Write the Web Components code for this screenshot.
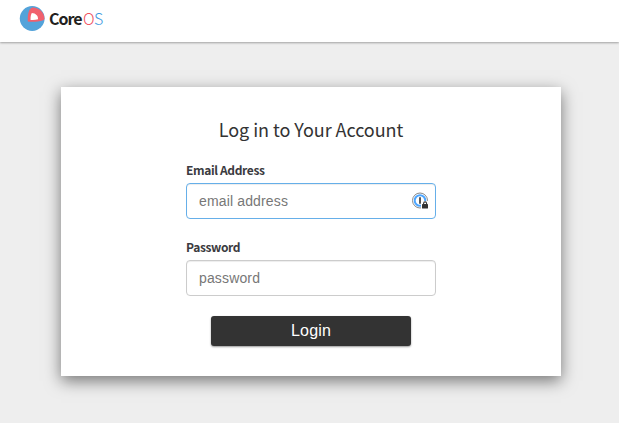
<!DOCTYPE html>
<html lang="en">
<head>
<meta charset="utf-8">
<title>CoreOS Account</title>
<style>
html, body { margin: 0; height: 100%; }
body { background: #eee; font-family: "Noto Sans CJK SC", sans-serif; color: #333; overflow: hidden; }
</style>
</head>
<body>
<account-page></account-page>
<script>
const define = (name, html) => {
  const template = document.createElement('template');
  template.innerHTML = html;
  customElements.define(name, class extends HTMLElement {
    constructor() {
      super();
      this.attachShadow({ mode: 'open' }).append(template.content.cloneNode(true));
    }
    connectedCallback() {
      const input = this.shadowRoot.querySelector('input');
      if (input) {
        input.type = this.getAttribute('type') || 'text';
        input.placeholder = this.getAttribute('placeholder') || '';
      }
    }
  });
};

define('core-logo', `
<style>
:host { display: flex; align-items: center; height: 26px; }
svg { display: block; width: 26px; height: 26px; margin-right: 4px; }
.name { font-size: 16px; line-height: 20px; white-space: nowrap; display: flex; margin-top: -2px; }
b { font-weight: 700; color: #231f20; letter-spacing: -1px; width: 34px; }
.o, .s { font-weight: 200; } .o { color: #f0505f; letter-spacing: -.7px; } .s { color: #3f9be0; }
</style>
<svg viewBox="0 0 26 26">
  <circle cx="13.2" cy="12.5" r="12.4" fill="#53a3da"/>
  <path d="M13.2 1.6C9.9 3 8.4 8 8.8 15.6c5.3.5 10.5.2 15.4-1.3q1.1-.5 1.3-1.6C25.2 6.5 20.2 1.4 13.2 1.6Z" fill="#f1606d"/>
  <path d="M12.8 7c-1 1.8-1.4 4-1.2 6.9 2.8.2 5 .1 7.4-.7.2-3.4-2.2-5.9-6.2-6.2Z" fill="#fff"/>
</svg>
<div class="name"><b>Core</b><span class="o">O</span><span class="s">S</span></div>`);

define('site-header', `
<style>
:host { display: flex; box-sizing: border-box; height: 42px; padding: 6px 0 0 19px; background: #fff; box-shadow: 0 1px 2px rgba(0,0,0,.32); }
</style>
<slot></slot>`);

define('login-card', `
<style>
:host { display: flex; flex-direction: column; align-items: center; box-sizing: border-box; width: 500px; height: 289px; padding-top: 27px; background: #fff; box-shadow: 0 5px 15px rgba(0,0,0,.5); }
h1 { margin: 0 0 18px; font-size: 18px; line-height: 30px; font-weight: 400; letter-spacing: -.05px; white-space: nowrap; }
</style>
<h1><slot name="title"></slot></h1>
<slot></slot>`);

define('form-field', `
<style>
:host { display: block; width: 250px; height: 77px; }
label { display: block; height: 21px; font-size: 12px; line-height: 16px; font-weight: 700; letter-spacing: -.36px; color: #3b3b40; }
.box { display: flex; align-items: center; box-sizing: border-box; height: 36px; padding: 0 5px 0 12px; border: 1px solid var(--edge, #ccc); border-radius: 4px; background: #fff; box-shadow: inset 0 1px 1px rgba(0,0,0,.075); }
input { flex: 1; min-width: 0; padding: 0; border: 0; outline: 0; background: none; font: 14px "Liberation Sans", sans-serif; letter-spacing: .15px; color: #333; }
input::placeholder { color: #777; opacity: 1; }
</style>
<label><slot></slot></label>
<div class="box"><input><slot name="icon"></slot></div>`);

define('key-icon', `
<style>
:host { display: block; width: 18px; height: 18px; }
svg { display: block; }
</style>
<svg width="18" height="18" viewBox="0 0 18 18">
  <circle cx="8" cy="8.5" r="7.5" fill="#fff" stroke="#888" stroke-width="1"/>
  <circle cx="8" cy="8.5" r="5.3" fill="none" stroke="#4da6ff" stroke-width="2"/>
  <path d="M7 5.3h2v6.4H7z" fill="#555"/>
  <path d="M9 17v-5.5l1.2-2.5h5.5L18 10v8H9Z" fill="#fff"/>
  <path d="M11.6 12.4v-1a1.5 1.5 0 0 1 3 0v1" fill="none" stroke="#333" stroke-width="1.1"/>
  <rect x="10" y="12" width="6" height="4.5" rx=".6" fill="#333"/>
</svg>`);

define('login-button', `
<style>
:host { display: block; }
button { display: block; width: 200px; height: 30px; padding: 0; border: 0; border-radius: 3px; background: #333; color: #fff; font: 16px/28px "Liberation Sans", sans-serif; letter-spacing: .15px; box-shadow: 0 1px 2px rgba(0,0,0,.4); }
</style>
<button><slot></slot></button>`);

define('account-page', `
<style>
:host { display: flex; flex-direction: column; height: 423px; }
main { display: flex; justify-content: center; padding: 45px 0 0 3px; }
</style>
<site-header><core-logo></core-logo></site-header>
<main>
  <login-card>
    <span slot="title">Log in to Your Account</span>
    <form-field type="email" placeholder="email address" style="--edge:#66afe9">Email Address<key-icon slot="icon"></key-icon></form-field>
    <form-field type="password" placeholder="password">Password</form-field>
    <login-button>Login</login-button>
  </login-card>
</main>`);
</script>
</body>
</html>
